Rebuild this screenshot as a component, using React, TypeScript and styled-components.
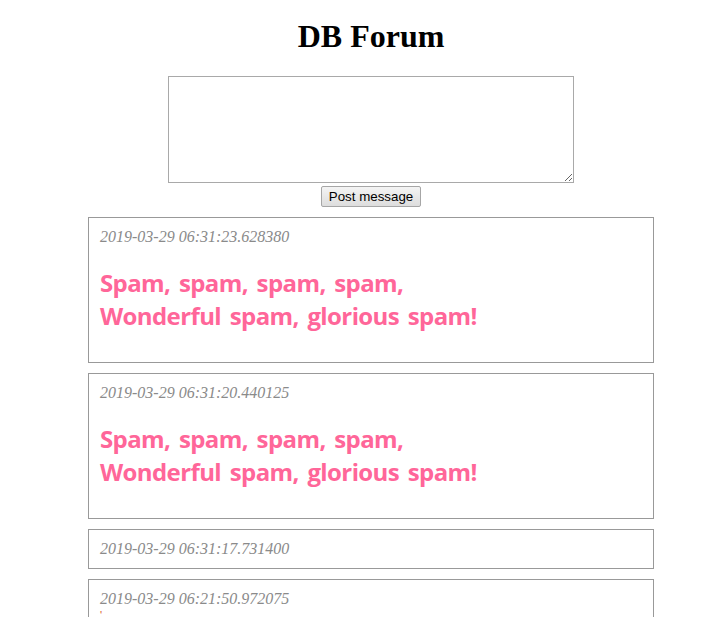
import React from "react";
import styled, { createGlobalStyle } from "styled-components";

const GlobalStyle = createGlobalStyle`
  html, body { margin: 0; padding: 0; background: #ffffff; }
  body { font-family: "Liberation Serif", "Times New Roman", serif; color: #000; }
`;

const Page = styled.div`
  padding-left: 16px;
  display: flex;
  flex-direction: column;
  align-items: center;
`;

const Title = styled.h1`
  font-family: "Liberation Serif", "Times New Roman", serif;
  font-size: 32px;
  font-weight: bold;
  line-height: normal;
  margin: 18px 0 21px;
  text-align: center;
`;

const PostForm = styled.form`
  display: flex;
  flex-direction: column;
  align-items: center;
  gap: 3px;
  margin: 0 0 10px;
`;

const MessageBox = styled.textarea`
  box-sizing: border-box;
  width: 406px;
  height: 107px;
  border: 1px solid #a9a9a9;
  padding: 2px;
  font-family: "Liberation Mono", monospace;
  font-size: 13.33px;
  resize: both;
  outline: none;
`;

const PostButton = styled.button`
  box-sizing: border-box;
  width: 100px;
  height: 21px;
  padding: 0 6px;
  font-family: "Liberation Sans", Arial, sans-serif;
  font-size: 13.33px;
  color: #000;
  background: linear-gradient(#f4f4f4, #dddddd);
  border: 1px solid #a6a6a6;
  border-radius: 2px;
  line-height: 17px;
`;

const Feed = styled.div`
  width: 566px;
  display: flex;
  flex-direction: column;
  gap: 10px;
`;

const Card = styled.div`
  border: 1px solid #999999;
  padding: 10px 10px 10px 11px;
`;

const Stamp = styled.div`
  font-family: "Liberation Serif", "Times New Roman", serif;
  font-style: italic;
  font-size: 16px;
  line-height: 18px;
  color: #8a8a8a;
`;

const Message = styled.h2`
  margin: 20px 0;
  font-family: "Comic Sans MS", "Open Sans", "Noto Sans", sans-serif;
  font-weight: bold;
  font-size: 24px;
  line-height: 33px;
  letter-spacing: -0.6px;
  word-spacing: 3px;
  color: #ff6699;
`;

const Tick = styled.div`
  font-family: "Liberation Sans", Arial, sans-serif;
  font-size: 11px;
  line-height: 8px;
  height: 8px;
  padding-top: 3px;
  color: #d9541e;
`;

type Post = { stamp: string; lines?: string[]; tick?: boolean };

const posts: Post[] = [
  { stamp: "2019-03-29 06:31:23.628380", lines: ["Spam, spam, spam, spam,", "Wonderful spam, glorious spam!"] },
  { stamp: "2019-03-29 06:31:20.440125", lines: ["Spam, spam, spam, spam,", "Wonderful spam, glorious spam!"] },
  { stamp: "2019-03-29 06:31:17.731400" },
  { stamp: "2019-03-29 06:21:50.972075", tick: true },
];

export default function App() {
  return (
    <>
      <GlobalStyle />
      <Page>
        <Title>DB Forum</Title>
        <PostForm onSubmit={(e) => e.preventDefault()}>
          <MessageBox />
          <PostButton type="submit">Post message</PostButton>
        </PostForm>
        <Feed>
          {posts.map((p) => (
            <Card key={p.stamp}>
              <Stamp>{p.stamp}</Stamp>
              {p.lines && (
                <Message>
                  {p.lines[0]}
                  <br />
                  {p.lines[1]}
                </Message>
              )}
              {p.tick && <Tick>'</Tick>}
            </Card>
          ))}
        </Feed>
      </Page>
    </>
  );
}
